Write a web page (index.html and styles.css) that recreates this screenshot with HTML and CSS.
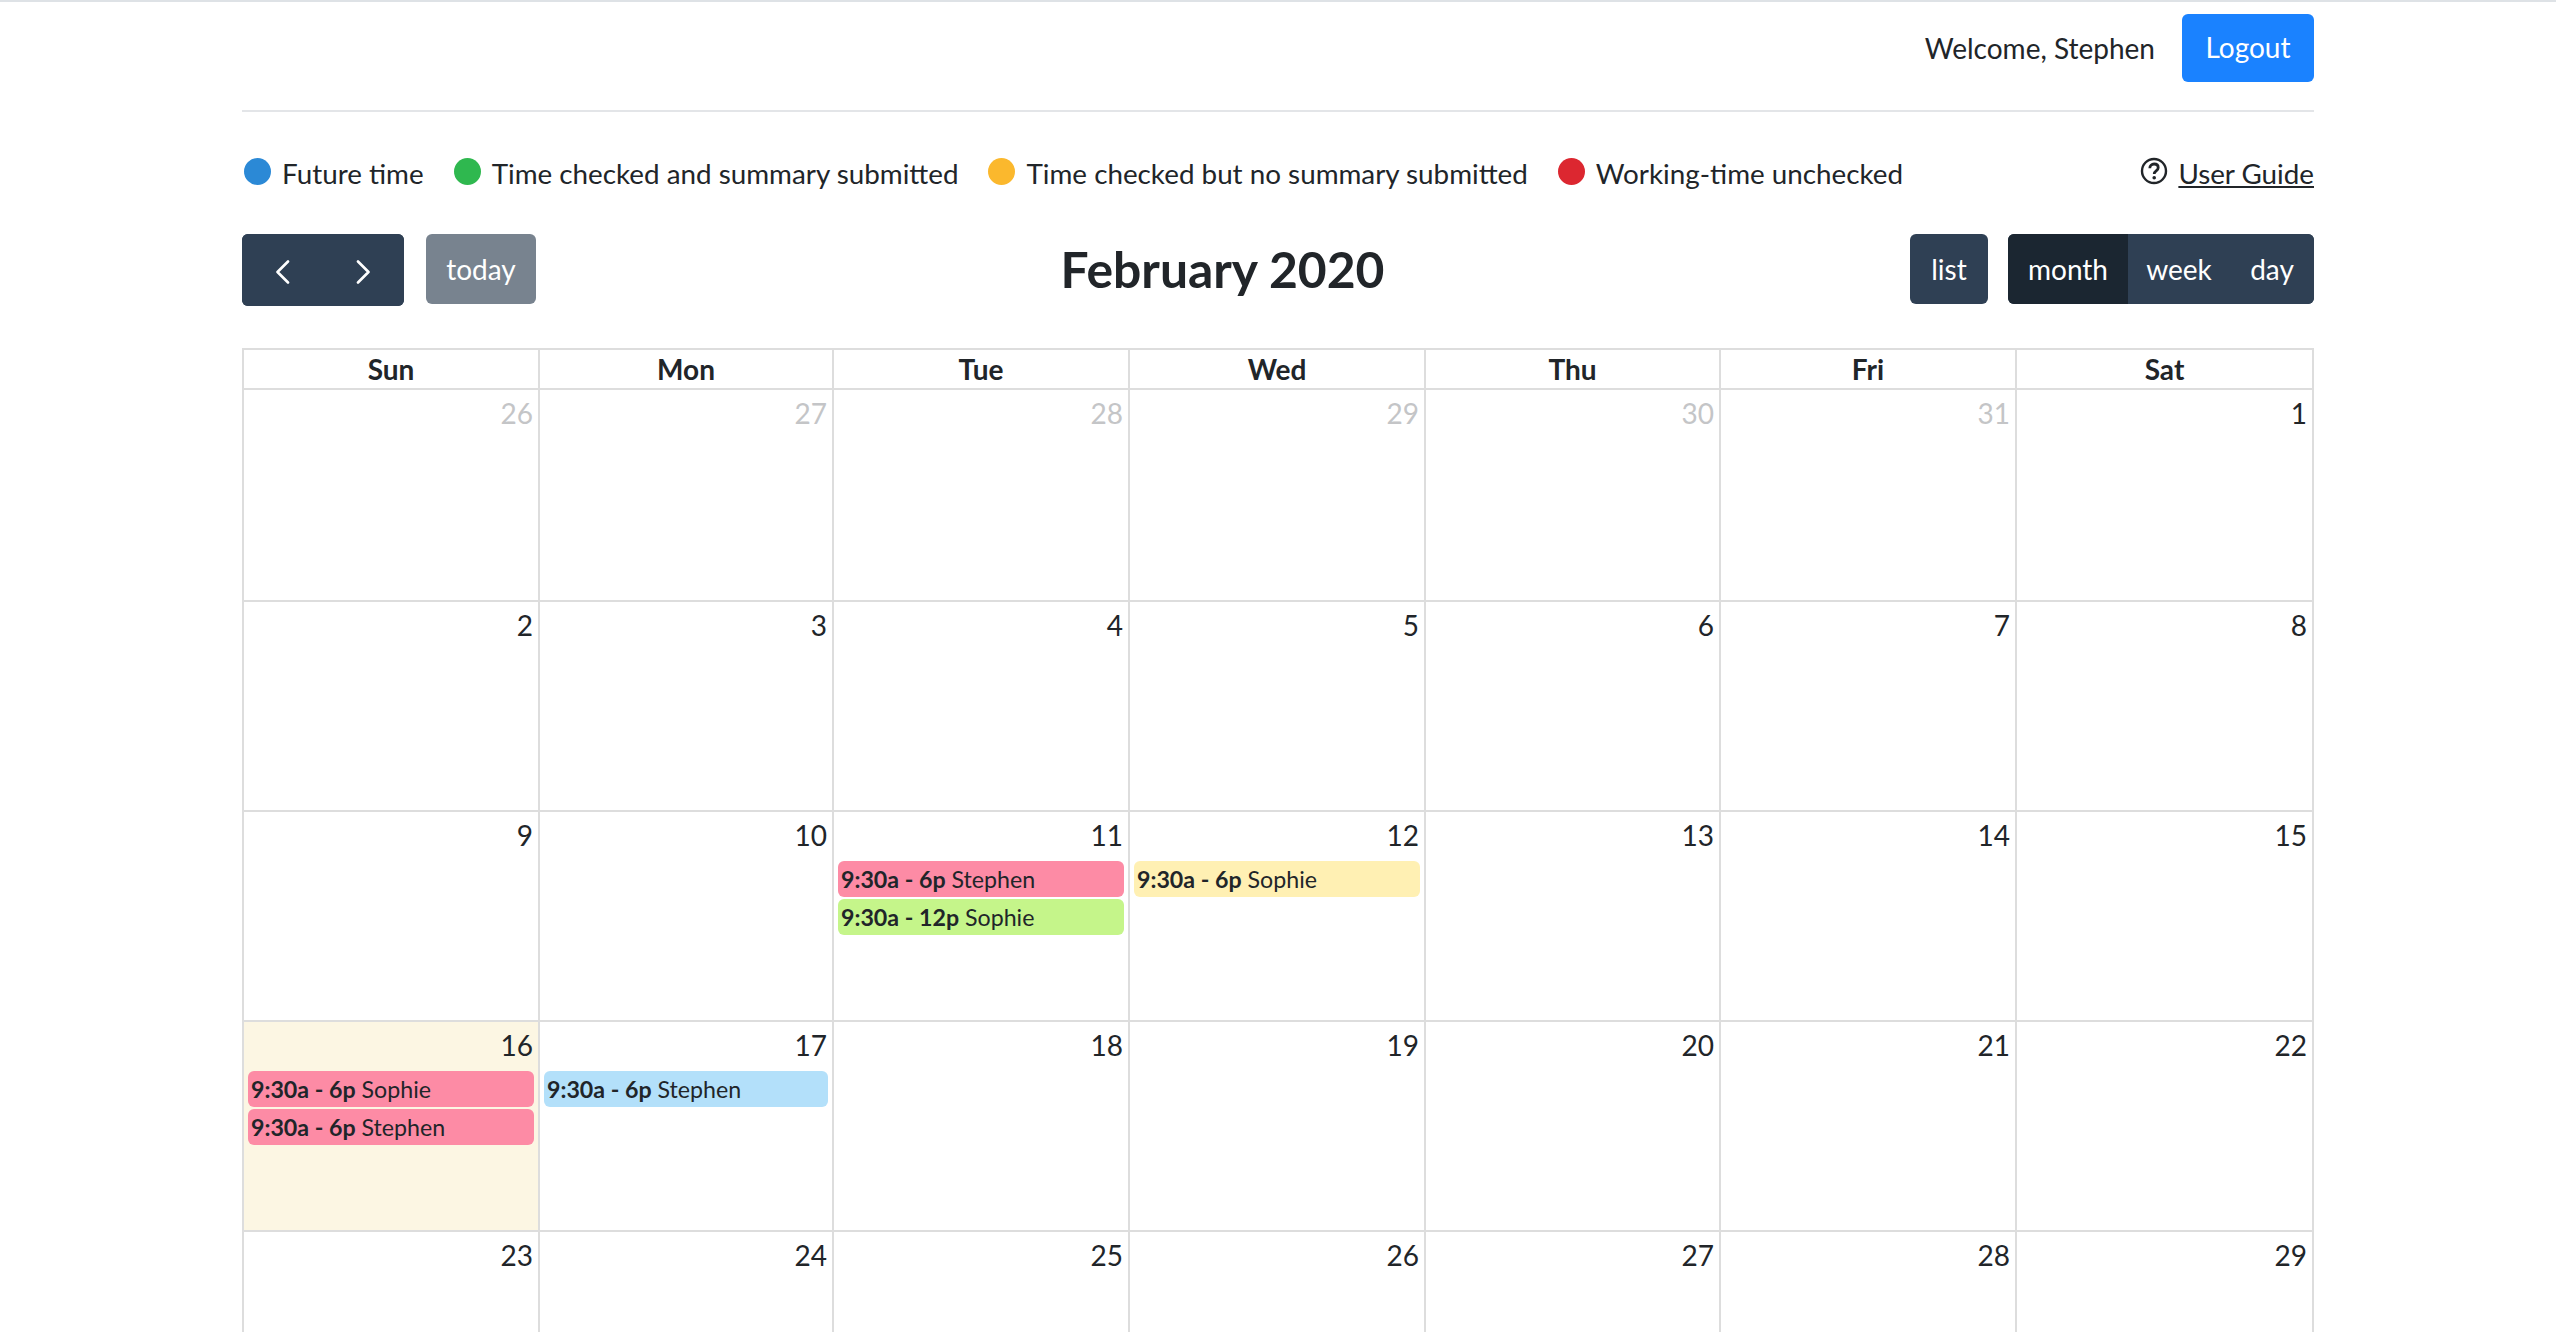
FILE: index.html
```html
<!DOCTYPE html>
<html lang="en">
<head>
<meta charset="utf-8">
<title>Calendar</title>
<link rel="stylesheet" href="styles.css">
</head>
<body>
<div class="page">
  <header class="topbar">
    <span class="welcome">Welcome, Stephen</span>
    <button class="logout">Logout</button>
  </header>
  <div class="legend-row">
    <ul class="legend">
      <li class="legend-item"><span class="dot dot-blue"></span>Future time</li>
      <li class="legend-item"><span class="dot dot-green"></span>Time checked and summary submitted</li>
      <li class="legend-item"><span class="dot dot-yellow"></span>Time checked but no summary submitted</li>
      <li class="legend-item"><span class="dot dot-red"></span>Working-time unchecked</li>
    </ul>
    <div class="guide">
      <svg class="guide-icon" viewBox="0 0 28 28" aria-hidden="true"><circle cx="14" cy="14" r="12" fill="none" stroke="#212529" stroke-width="2.4"/><path d="M9.8 11.2c0-2.5 1.9-4.2 4.3-4.2s4.1 1.5 4.1 3.7c0 3.2-4 3.2-4 6.3" fill="none" stroke="#212529" stroke-width="2.8"/><circle cx="14.2" cy="20.8" r="1.8" fill="#212529"/></svg>
      <a class="guide-link" href="#">User Guide</a>
    </div>
  </div>
  <div class="toolbar">
    <div class="tool-group">
      <div class="btn-group nav-group">
        <button class="btn nav-btn"><svg class="chev" viewBox="0 0 15 24"><path d="M13 1.5 2.5 12 13 22.5" fill="none" stroke="#fff" stroke-width="2.6" stroke-linecap="round" stroke-linejoin="round"/></svg></button>
        <button class="btn nav-btn"><svg class="chev" viewBox="0 0 15 24"><path d="M2 1.5 12.5 12 2 22.5" fill="none" stroke="#fff" stroke-width="2.6" stroke-linecap="round" stroke-linejoin="round"/></svg></button>
      </div>
      <button class="btn btn-today">today</button>
    </div>
    <h2 class="title">February 2020</h2>
    <div class="tool-group">
      <button class="btn btn-list">list</button>
      <div class="btn-group">
        <button class="btn btn-month">month</button>
        <button class="btn btn-week">week</button>
        <button class="btn btn-day">day</button>
      </div>
    </div>
  </div>
  <div class="calendar">
    <div class="head">Sun</div><div class="head">Mon</div><div class="head">Tue</div><div class="head">Wed</div><div class="head">Thu</div><div class="head">Fri</div><div class="head">Sat</div>

    <div class="day muted"><span class="num">26</span></div>
    <div class="day muted"><span class="num">27</span></div>
    <div class="day muted"><span class="num">28</span></div>
    <div class="day muted"><span class="num">29</span></div>
    <div class="day muted"><span class="num">30</span></div>
    <div class="day muted"><span class="num">31</span></div>
    <div class="day"><span class="num">1</span></div>

    <div class="day"><span class="num">2</span></div>
    <div class="day"><span class="num">3</span></div>
    <div class="day"><span class="num">4</span></div>
    <div class="day"><span class="num">5</span></div>
    <div class="day"><span class="num">6</span></div>
    <div class="day"><span class="num">7</span></div>
    <div class="day"><span class="num">8</span></div>

    <div class="day"><span class="num">9</span></div>
    <div class="day"><span class="num">10</span></div>
    <div class="day"><span class="num">11</span>
      <div class="event ev-pink"><b>9:30a - 6p</b> Stephen</div>
      <div class="event ev-green"><b>9:30a - 12p</b> Sophie</div>
    </div>
    <div class="day"><span class="num">12</span>
      <div class="event ev-yellow"><b>9:30a - 6p</b> Sophie</div>
    </div>
    <div class="day"><span class="num">13</span></div>
    <div class="day"><span class="num">14</span></div>
    <div class="day"><span class="num">15</span></div>

    <div class="day today"><span class="num">16</span>
      <div class="event ev-pink"><b>9:30a - 6p</b> Sophie</div>
      <div class="event ev-pink"><b>9:30a - 6p</b> Stephen</div>
    </div>
    <div class="day"><span class="num">17</span>
      <div class="event ev-blue"><b>9:30a - 6p</b> Stephen</div>
    </div>
    <div class="day"><span class="num">18</span></div>
    <div class="day"><span class="num">19</span></div>
    <div class="day"><span class="num">20</span></div>
    <div class="day"><span class="num">21</span></div>
    <div class="day"><span class="num">22</span></div>

    <div class="day"><span class="num">23</span></div>
    <div class="day"><span class="num">24</span></div>
    <div class="day"><span class="num">25</span></div>
    <div class="day"><span class="num">26</span></div>
    <div class="day"><span class="num">27</span></div>
    <div class="day"><span class="num">28</span></div>
    <div class="day"><span class="num">29</span></div>
  </div>
</div>
</body>
</html>
```
FILE: styles.css
```css
* { box-sizing: border-box; }
html, body { margin: 0; height: 100%; overflow: hidden; background: #fff; }
body {
  font-family: Lato, "Open Sans", sans-serif;
  font-size: 28px;
  color: #212529;
  border-top: 2px solid #dee2e6;
}
.page { width: 2072px; margin-left: 242px; }
.topbar {
  display: flex;
  justify-content: flex-end;
  align-items: center;
  gap: 27px;
  height: 110px;
  padding-top: 12px;
  padding-bottom: 28px;
  border-bottom: 2px solid #e3e5e8;
}
.welcome { margin-top: -1px; }
.logout {
  width: 132px;
  height: 68px;
  background: #1a82ff;
  color: #fff;
  border: 0;
  border-radius: 6px;
  font: inherit;
  padding: 0 0 3px;
}
.legend-row {
  display: flex;
  justify-content: space-between;
  align-items: center;
  margin-top: 44px;
  height: 34px;
  font-size: 27.8px;
}
.legend { display: flex; gap: 28px; list-style: none; margin: 0; padding: 0; }
.legend-item { display: flex; align-items: center; gap: 11px; }
.dot { width: 27px; height: 27px; border-radius: 50%; margin-left: 2px; margin-top: -4px; }
.dot-blue { background: #2b89d6; }
.dot-green { background: #2fb84f; }
.dot-yellow { background: #fbb82d; }
.dot-red { background: #dc2730; }
.guide { display: flex; align-items: center; gap: 10px; }
.guide-icon { width: 28px; height: 28px; margin-top: -4px; }
.guide-link { color: #212529; text-decoration: underline; }
.toolbar {
  display: flex;
  justify-content: space-between;
  align-items: flex-start;
  margin-top: 44px;
  height: 114px;
}
.tool-group { display: flex; gap: 20px; align-items: flex-start; }
.btn-group { display: flex; border-radius: 6px; overflow: hidden; background: #2f4054; }
.btn {
  height: 70px;
  border: 0;
  padding: 0;
  background: #2f4054;
  color: #fff;
  font: inherit;
}
.nav-group { height: 72px; margin-right: 2px; }
.nav-btn { width: 81px; height: 72px; display: flex; align-items: center; justify-content: center; }
.chev { width: 15px; height: 24px; margin-top: 4px; }
.btn-today { width: 110px; background: #78838f; border-radius: 6px; }
.btn-list { width: 78px; border-radius: 6px; }
.btn-month { width: 120px; background: #1b2631; }
.btn-week { width: 102px; }
.btn-day { width: 84px; }
.title { margin: 6px 1px 0 0; font-size: 49.8px; font-weight: 700; line-height: 1.2; }
.calendar {
  display: grid;
  grid-template-columns: 296px 294px 296px 296px 295px 296px 297px;
  grid-template-rows: 40px 212px repeat(4, 210px);
  border-top: 2px solid #dddddd;
  border-left: 2px solid #dddddd;
}
.head {
  border-right: 2px solid #dddddd;
  border-bottom: 2px solid #dddddd;
  text-align: center;
  font-weight: 700;
  line-height: 38px;
}
.day {
  border-right: 2px solid #dddddd;
  border-bottom: 2px solid #dddddd;
  padding: 5px 4px 0 4px;
}
.num { display: block; text-align: right; line-height: 36px; padding-right: 1px; margin-bottom: 8px; }
.muted .num { color: #c4c5c7; }
.today { background: #fcf6e3; }
.event {
  height: 36px;
  margin: 2px 0 2px 0;
  padding-left: 3px;
  border-radius: 6px;
  font-size: 23.2px;
  line-height: 36px;
  color: #212529;
}
.event b { font-weight: 700; }
.ev-pink { background: #fd8ba5; }
.ev-green { background: #c5f58a; }
.ev-yellow { background: #fff0b3; }
.ev-blue { background: #b3e0fa; }
```
